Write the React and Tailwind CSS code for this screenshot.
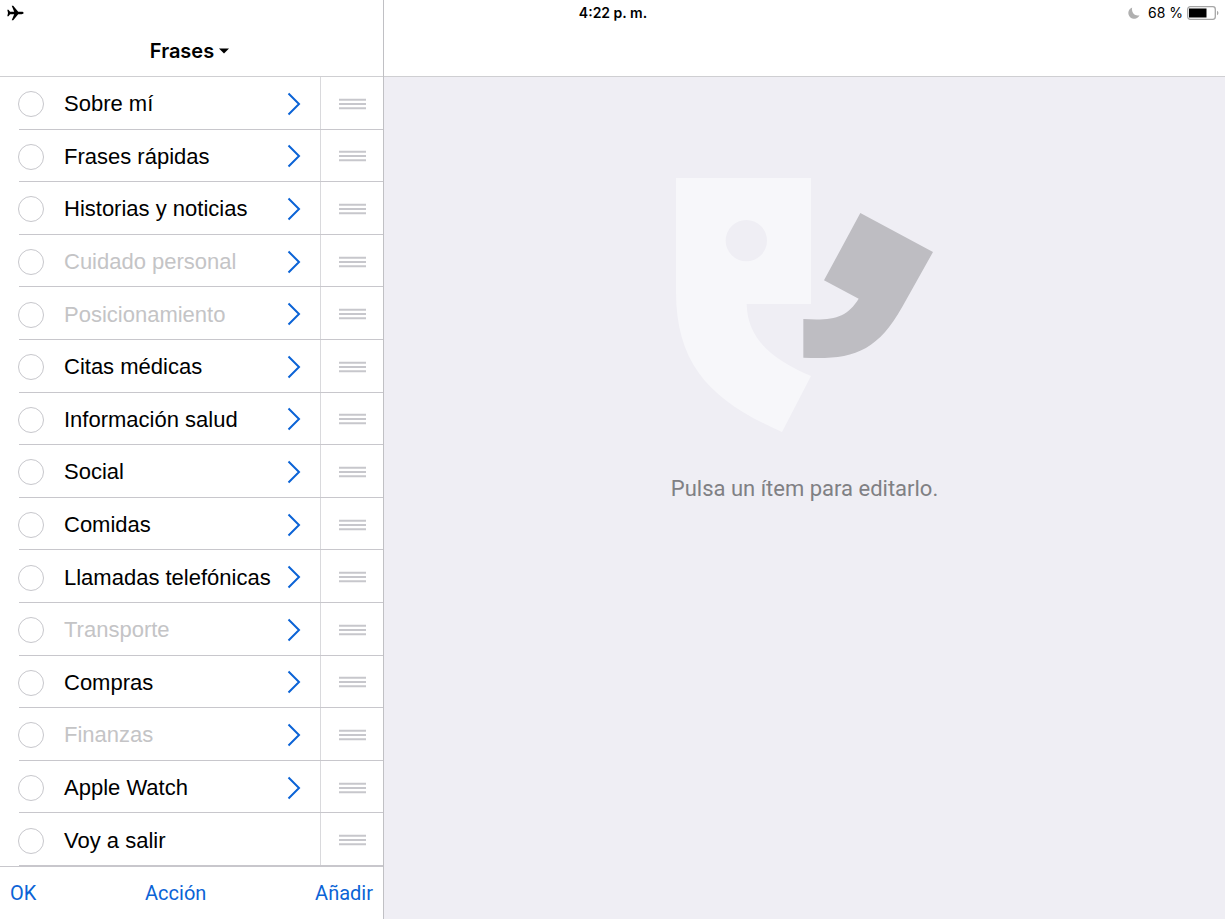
const phrases = [
  { label: 'Sobre mí', folder: true },
  { label: 'Frases rápidas', folder: true },
  { label: 'Historias y noticias', folder: true },
  { label: 'Cuidado personal', folder: true, hidden: true },
  { label: 'Posicionamiento', folder: true, hidden: true },
  { label: 'Citas médicas', folder: true },
  { label: 'Información salud', folder: true },
  { label: 'Social', folder: true },
  { label: 'Comidas', folder: true },
  { label: 'Llamadas telefónicas', folder: true },
  { label: 'Transporte', folder: true, hidden: true },
  { label: 'Compras', folder: true },
  { label: 'Finanzas', folder: true, hidden: true },
  { label: 'Apple Watch', folder: true },
  { label: 'Voy a salir', folder: false },
];

// Icons
function PlaneIcon() {
  return (
    <svg width="17" height="16" viewBox="0 0 17 16" aria-hidden="true">
      <path
        d="M16.6 8c0-.7-.8-1.2-2-1.2h-3.4L6.200.7H4.700l2.500 6.100H3.100L1.500 4.700H.3L1 8l-.7 3.300h1.200l1.600-2.100h4.100l-2.500 6.100h1.500l5-6.100h3.400c1.200 0 2-.5 2-1.200z"
        fill="#000"
      />
    </svg>
  );
}

function MoonIcon() {
  return (
    <svg width="12" height="12" viewBox="0 0 12 12" aria-hidden="true">
      <path d="M4.200.5A5.800 5.800 0 1 0 11.500 8.200C7 9.600 3 5.500 4.200.5z" fill="#b0b0b0" />
    </svg>
  );
}

function BatteryIcon() {
  return (
    <svg width="32" height="14" viewBox="0 0 32 14" aria-hidden="true">
      <rect x="0.7" y="0.7" width="27.600" height="12.600" rx="2.500" fill="#fff" stroke="#a6a6a6" strokeWidth="1.300" />
      <rect x="2" y="2.500" width="17.500" height="9" fill="#000" />
      <path d="M30 4.800c1 .5 1.400 1.200 1.400 2.200S31 8.700 30 9.200z" fill="#a6a6a6" />
    </svg>
  );
}

function ChevronIcon() {
  return (
    <svg width="14" height="24" viewBox="0 0 14 24" aria-hidden="true">
      <path d="M1.500 1.500 12 12 1.500 22.500" fill="none" stroke="#0b63d6" strokeWidth="2" />
    </svg>
  );
}

function HandleIcon() {
  return (
    <svg width="27" height="12" viewBox="0 0 27 12" aria-hidden="true">
      <path d="M0 1.700h27M0 6h27M0 10.300h27" stroke="#c7c7cc" strokeWidth="2" />
    </svg>
  );
}

function Logo() {
  return (
    <svg width="257" height="254" viewBox="48 54 771 762" aria-hidden="true">
      <path
        d="M48 54H453V432H260C262 540 341 600 453 648L366 816C160 725 48 620 48 395ZM259 180a62 62 0 1 0 0 124a62 62 0 1 0 0-124Z"
        fill="#f7f7fa"
        fillRule="evenodd"
      />
      <path
        d="M601 159L819 276L727 440C650 578 574 600 430 593V477C520 482 560 474 596 416L492 361Z"
        fill="#bebdc2"
      />
    </svg>
  );
}

// Status bar, drawn over both panes
function StatusBar() {
  return (
    <div className="pointer-events-none absolute inset-x-0 top-0 grid h-[25px] grid-cols-3 items-center pl-[7px] pr-[6px] text-sm text-black">
      <PlaneIcon />
      <span className="text-center font-semibold">4:22 p. m.</span>
      <span className="flex items-center justify-end gap-1">
        <MoonIcon />
        <span className="ml-1">68 %</span>
        <BatteryIcon />
      </span>
    </div>
  );
}

function PhraseRow({ item, index }) {
  const id = `phrase-${index}`;
  return (
    <li className="flex min-h-10 flex-1 pl-[18px]">
      <div className="flex items-center">
        <input
          id={id}
          type="checkbox"
          aria-label={item.label}
          className="relative mt-0.5 size-[26px] cursor-pointer appearance-none rounded-full border border-[#c7c7cc] bg-white checked:bg-[#0b63d6]"
        />
      </div>
      <div className="-ml-[25px] flex flex-1 border-b border-[#c8c7cc] pl-[25px]">
        <button
          type="button"
          className={`flex flex-1 items-center justify-between pl-5 pr-[19px] pt-0.5 text-left font-['Liberation_Sans',Arial,sans-serif] text-[22px] ${
            item.hidden ? 'text-[#c4c4c6]' : 'text-black'
          }`}
        >
          <span className="whitespace-nowrap">{item.label}</span>
          {item.folder && <ChevronIcon />}
        </button>
        <div className="flex w-[63px] items-center justify-center border-l border-[#d9d9dc] pt-0.5">
          <HandleIcon />
        </div>
      </div>
    </li>
  );
}

function Sidebar() {
  return (
    <aside className="flex w-96 shrink-0 flex-col border-r border-[#c0c0c4] bg-white">
      <header className="flex h-[77px] items-end justify-center border-b border-[#cfcfd2] pb-[11px] pr-1">
        <button type="button" className="flex items-center gap-[5px] text-xl font-semibold text-black">
          Frases
          <svg width="10" height="6" viewBox="0 0 10 6" aria-hidden="true">
            <path d="M0 0.500h10L5 5.500z" fill="#000" />
          </svg>
        </button>
      </header>
      <ul className="flex flex-1 flex-col">
        {phrases.map((item, index) => (
          <PhraseRow key={item.label} item={item} index={index} />
        ))}
      </ul>
      <footer className="flex h-[53px] items-center justify-between border-t border-[#c8c7cc] px-2.5 font-['Roboto',sans-serif] text-xl text-[#0b63d6]">
        <button type="button">OK</button>
        <button type="button">Acción</button>
        <button type="button">Añadir</button>
      </footer>
    </aside>
  );
}

function DetailPane() {
  return (
    <main className="flex flex-1 flex-col bg-[#efeef4]">
      <div className="h-[77px] border-b border-[#cfcfd2] bg-white" />
      <div className="flex flex-col items-center pt-[101px]">
        <Logo />
        <p className="mt-10 font-['Roboto',sans-serif] text-[22px] text-[#808084]">Pulsa un ítem para editarlo.</p>
      </div>
    </main>
  );
}

export default function App() {
  return (
    <div className="relative flex min-h-screen bg-white font-['Inter',sans-serif]">
      <Sidebar />
      <DetailPane />
      <StatusBar />
    </div>
  );
}
